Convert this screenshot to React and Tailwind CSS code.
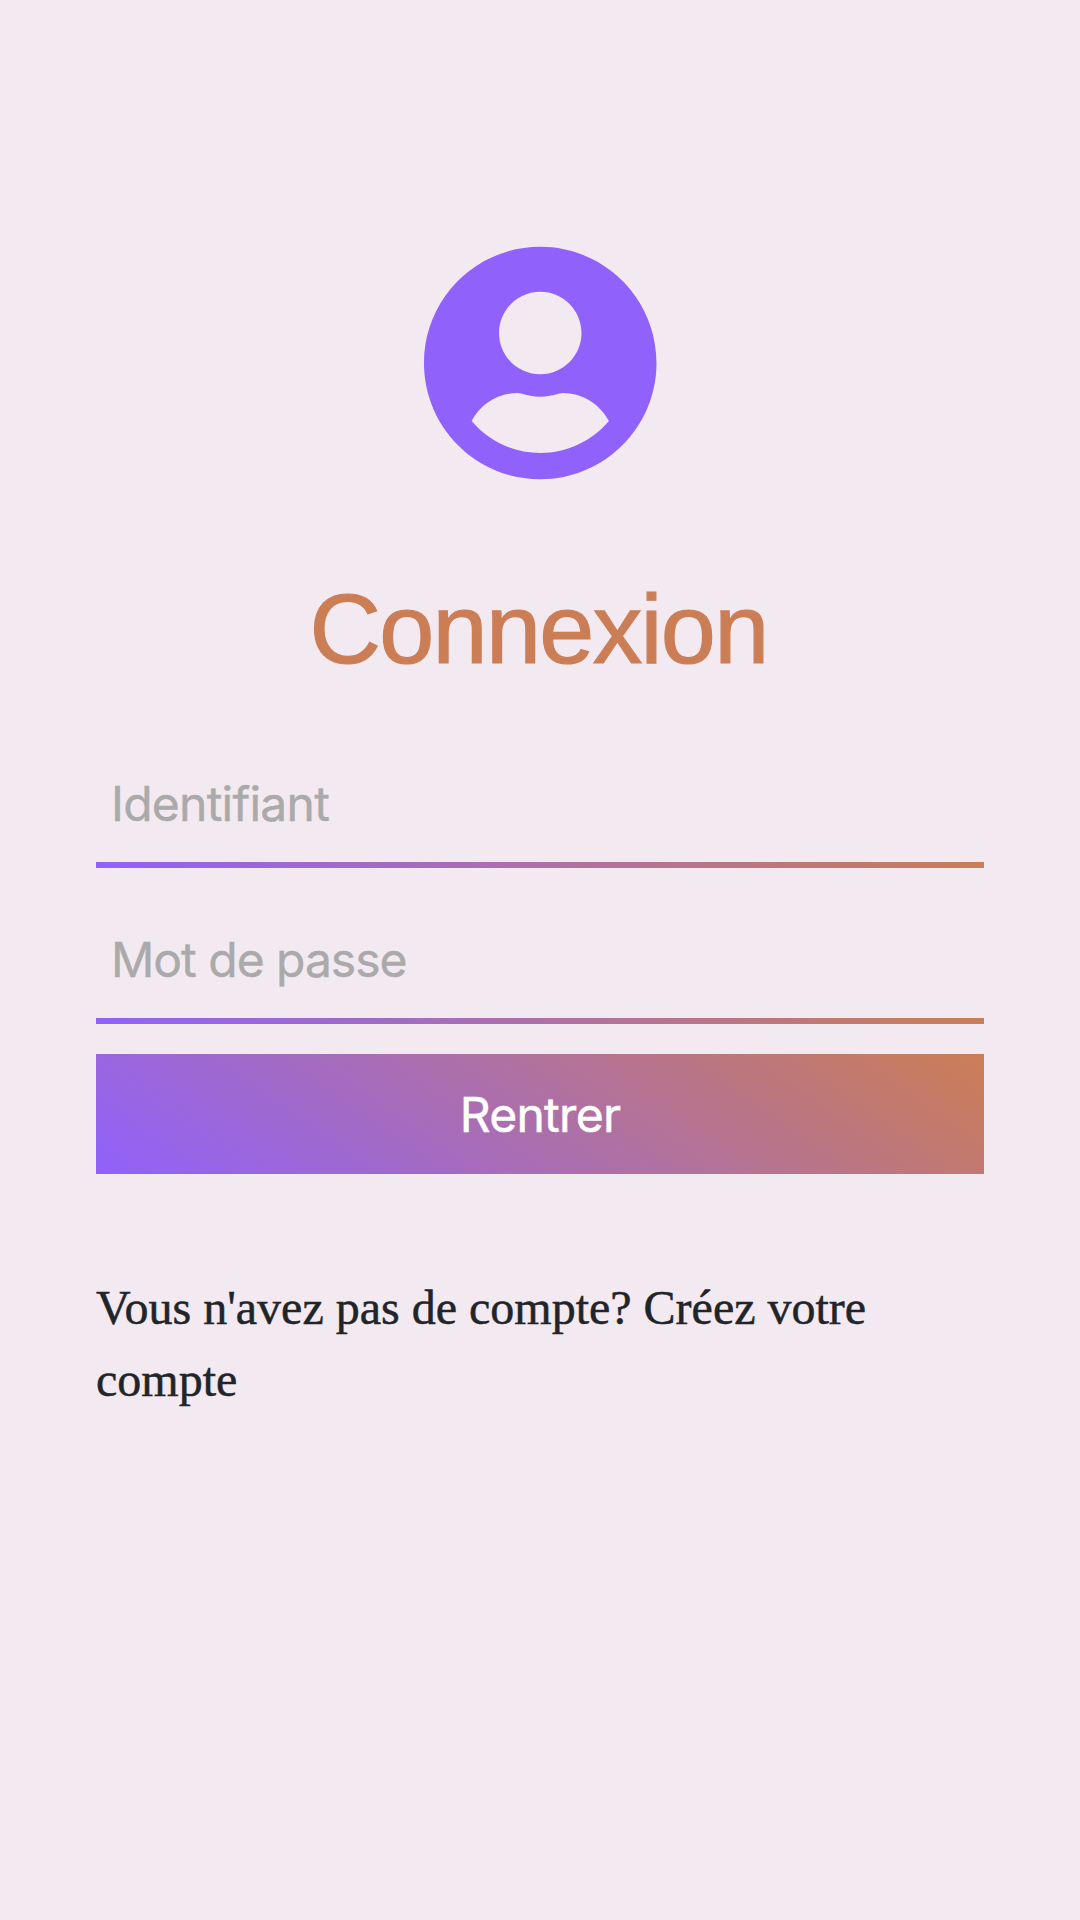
const fieldClass =
  "block w-full bg-transparent pr-4 pl-[15px] pb-1 outline-none font-['Inter',sans-serif] text-[48px] text-[#212529] placeholder:text-[#aaaaaa] placeholder:opacity-100 [-webkit-text-stroke:0.4px_#aaaaaa]";

function UserCircle() {
  return (
    <svg viewBox="0 0 496 512" className="h-60 w-[232.5px] overflow-visible text-[#9061fb]" fill="currentColor" aria-hidden="true">
      <path d="M248 8C111 8 0 119 0 256s111 248 248 248 248-111 248-248S385 8 248 8zm0 96c48.6 0 88 39.4 88 88s-39.4 88-88 88-88-39.4-88-88 39.4-88 88-88zm0 344c-58.7 0-111.3-26.6-146.5-68.2 18.8-35.4 55.6-59.8 98.5-59.8 2.4 0 4.8.4 7.1 1.1 13 4.2 26.6 6.9 40.9 6.9 14.3 0 28-2.7 40.9-6.9 2.3-.7 4.7-1.1 7.1-1.1 42.9 0 79.7 24.4 98.5 59.8C359.3 421.4 306.7 448 248 448z" />
    </svg>
  );
}

export default function App() {
  return (
    <main className="flex min-h-[1920px] w-full flex-col items-center bg-[#f3e9f0] px-24 pt-[243px]">
      <UserCircle />
      <h1 className="mt-[88px] mb-[2px] mr-[3px] font-['Liberation_Sans',sans-serif] text-[99px] leading-[115px] font-normal tracking-[-1.7px] text-[#cb7e55] [-webkit-text-stroke:1.2px_#cb7e55]">
        Connexion
      </h1>
      <form className="mt-[60px] flex w-full flex-col" onSubmit={(e) => e.preventDefault()}>
        <div>
          <input type="text" placeholder="Identifiant" className={`${fieldClass} h-[114px] tracking-[-0.75px]`} />
          <div className="h-1.5 bg-[linear-gradient(35deg,#9061fb,#cb7e55)]" />
        </div>
        <div className="mt-9">
          <input type="password" placeholder="Mot de passe" className={`${fieldClass} h-[114px] tracking-[-1.02px]`} />
          <div className="h-1.5 bg-[linear-gradient(35deg,#9061fb,#cb7e55)]" />
        </div>
        <button
          type="submit"
          className="mt-[30px] h-[120px] w-full bg-[linear-gradient(35deg,#9061fb,#cb7e55)] pt-0.5 font-['Inter',sans-serif] text-[48px] tracking-[-0.7px] text-white [-webkit-text-stroke:0.5px_white]"
        >
          Rentrer
        </button>
      </form>
      <p className="mt-[98px] w-full font-['Liberation_Serif',serif] text-[48px] leading-[72px] text-[#212529] [-webkit-text-stroke:0.5px_#212529]">
        Vous n'avez pas de compte? Créez votre compte
      </p>
    </main>
  );
}
